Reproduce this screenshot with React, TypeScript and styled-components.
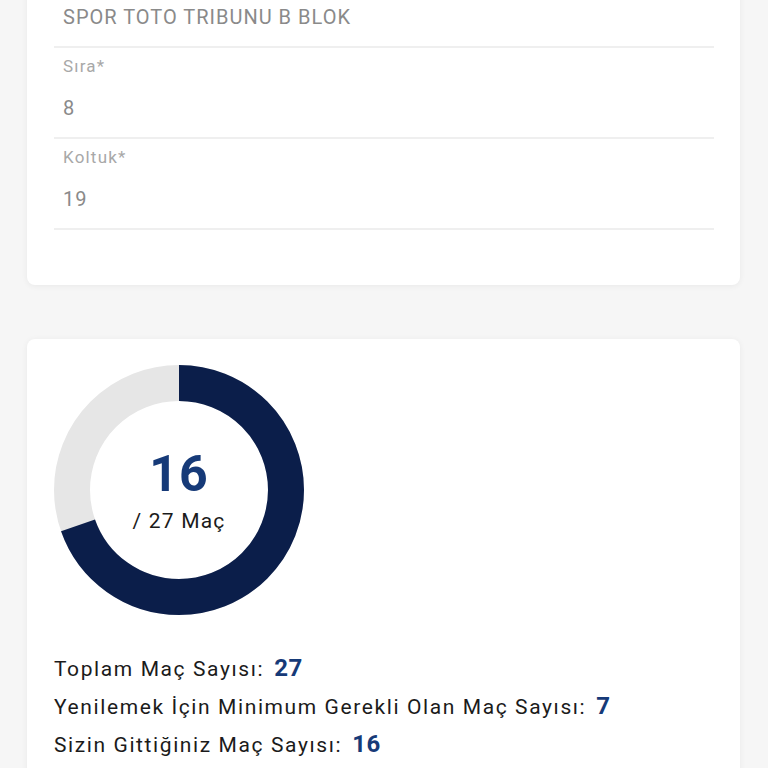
import styled, { createGlobalStyle } from "styled-components";

const GlobalStyle = createGlobalStyle`
  html, body {
    margin: 0;
    padding: 0;
    background: #f6f6f6;
    font-family: Roboto, "Noto Sans", sans-serif;
    overflow: hidden;
  }
`;

const Page = styled.div`
  width: 768px;
  padding: 0 28px 0 27px;
  box-sizing: border-box;
  margin-top: -69px;
  display: flex;
  flex-direction: column;
  gap: 54px;
`;

const Card = styled.div`
  background: #ffffff;
  border-radius: 8px;
  box-shadow: 0 1px 6px rgba(0, 0, 0, 0.06);
  padding: 26px 26px 55px 27px;
`;

const Field = styled.div`
  height: 91px;
  box-sizing: border-box;
  border-bottom: 2px solid #efefef;
  display: flex;
  flex-direction: column;
  padding: 8px 9px 0;
`;

const Label = styled.span`
  font-size: 17px;
  color: #a8a8a8;
  letter-spacing: 1.2px;
  line-height: 20px;
`;

const Value = styled.span`
  margin-top: 21px;
  font-size: 20px;
  color: #8a8a8a;
  letter-spacing: 1px;
  line-height: 22px;
`;

const Chart = styled.div`
  position: relative;
  width: 250px;
  height: 250px;
`;

const ChartCenter = styled.div`
  position: absolute;
  inset: 0;
  display: flex;
  flex-direction: column;
  align-items: center;
  justify-content: center;
`;

const Big = styled.span`
  font-size: 50px;
  font-weight: 700;
  color: #163a78;
  letter-spacing: 1px;
  line-height: 52px;
`;

const Small = styled.span`
  margin-top: 9px;
  font-size: 21px;
  color: #1b1b1b;
  letter-spacing: 1.2px;
`;

const Stats = styled.div`
  margin-top: 40px;
  display: flex;
  flex-direction: column;
  gap: 11px;
`;

const Stat = styled.div`
  display: flex;
  align-items: baseline;
  gap: 10px;
  font-size: 21px;
  color: #1b1b1b;
  letter-spacing: 1.6px;
  line-height: 26px;
`;

const Num = styled.span`
  font-size: 24px;
  font-weight: 700;
  color: #163a78;
  letter-spacing: 0.5px;
`;

const fields = [
  { label: "Blok*", value: "SPOR TOTO TRIBUNU B BLOK" },
  { label: "Sıra*", value: "8" },
  { label: "Koltuk*", value: "19" },
];

const stats = [
  { label: "Toplam Maç Sayısı:", value: 27 },
  { label: "Yenilemek İçin Minimum Gerekli Olan Maç Sayısı:", value: 7 },
  { label: "Sizin Gittiğiniz Maç Sayısı:", value: 16 },
];

// dark part = attended / (attended + minimum)
const Donut = ({ done, rest }: { done: number; rest: number }) => {
  const r = 107;
  const c = 2 * Math.PI * r;
  const part = (done / (done + rest)) * c;
  return (
    <svg width="250" height="250" viewBox="0 0 250 250">
      <circle cx="125" cy="125" r={r} fill="none" stroke="#e6e6e6" strokeWidth="36" />
      <circle
        cx="125"
        cy="125"
        r={r}
        fill="none"
        stroke="#0b1e4a"
        strokeWidth="36"
        strokeDasharray={`${part} ${c}`}
        transform="rotate(-90 125 125)"
      />
    </svg>
  );
};

const App = () => {
  return (
    <>
      <GlobalStyle />
      <Page>
        <Card>
          {fields.map((f) => (
            <Field key={f.label}>
              <Label>{f.label}</Label>
              <Value>{f.value}</Value>
            </Field>
          ))}
        </Card>
        <Card>
          <Chart>
            <Donut done={16} rest={7} />
            <ChartCenter>
              <Big>16</Big>
              <Small>/ 27 Maç</Small>
            </ChartCenter>
          </Chart>
          <Stats>
            {stats.map((s) => (
              <Stat key={s.label}>
                {s.label}
                <Num>{s.value}</Num>
              </Stat>
            ))}
          </Stats>
        </Card>
      </Page>
    </>
  );
};

export default App;
